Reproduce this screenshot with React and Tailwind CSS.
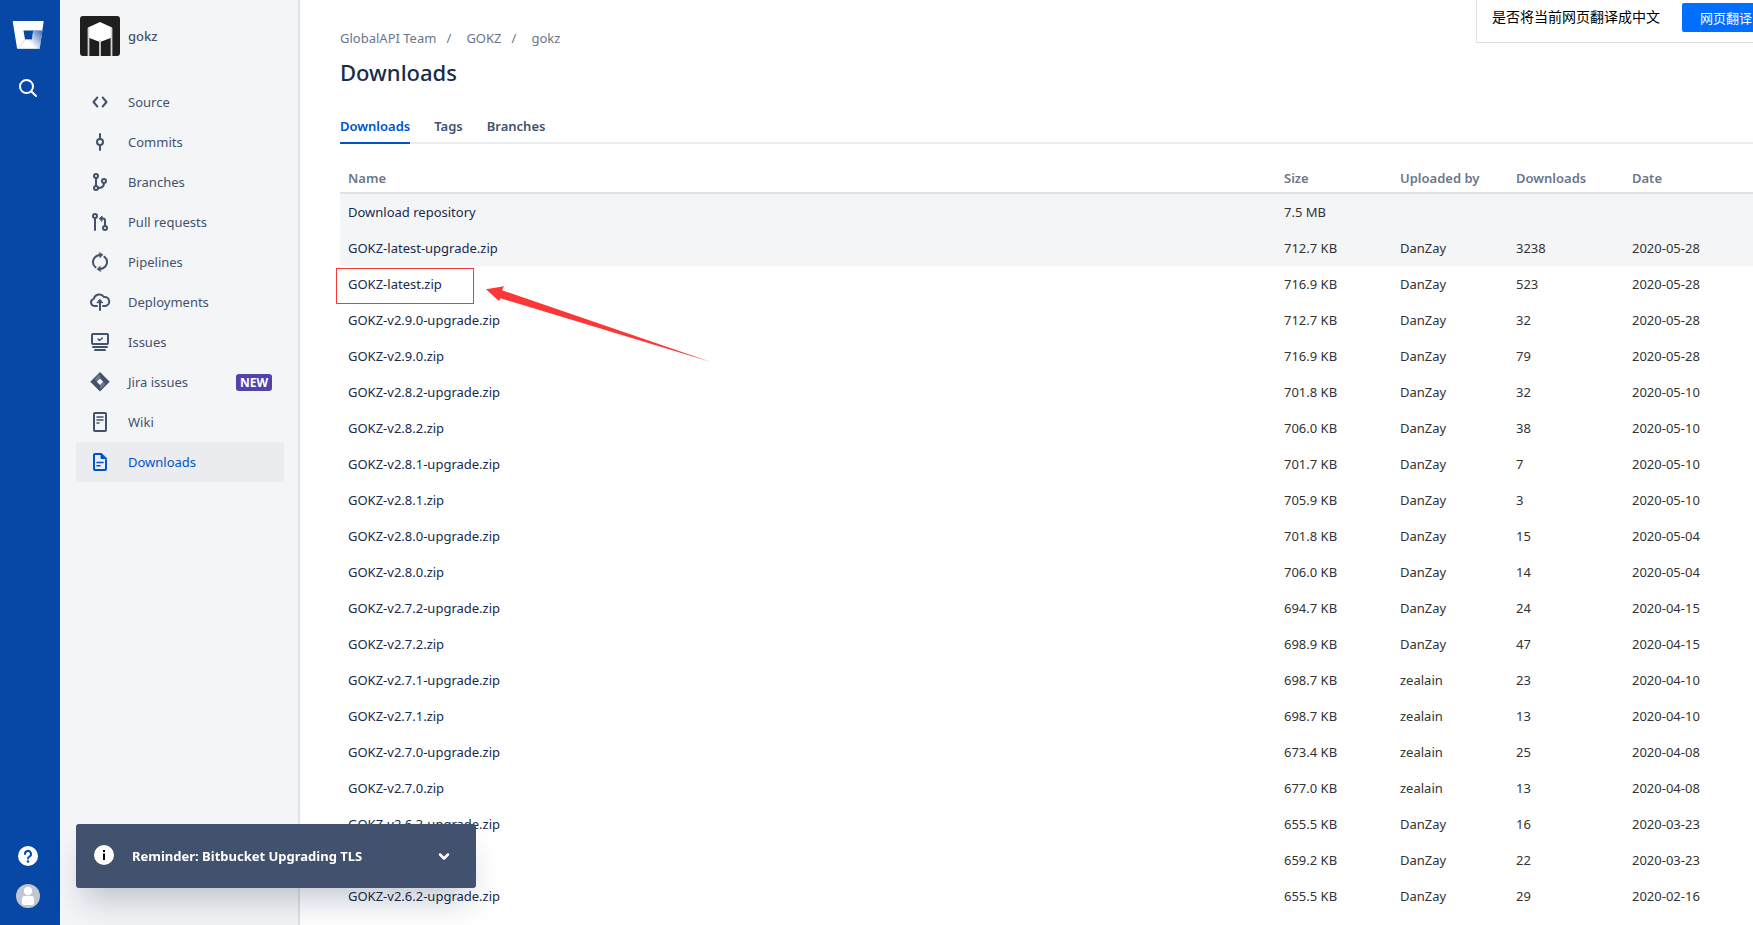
import React, { useState } from 'react';

const stroke = {
  fill: 'none',
  stroke: 'currentColor',
  strokeWidth: 2,
  strokeLinecap: 'round',
  strokeLinejoin: 'round',
};

const Icon = ({ children }) => (
  <svg viewBox="0 0 24 24" className="h-6 w-6 flex-shrink-0" aria-hidden="true" {...stroke}>
    {children}
  </svg>
);

const icons = {
  source: (
    <Icon>
      <path d="M9.3 7.5L5.5 12l3.800 4.500M14.700 7.500l3.800 4.500-3.800 4.500" />
    </Icon>
  ),
  commits: (
    <Icon>
      <circle cx="12" cy="12" r="3" />
      <path d="M12 4v5M12 15v5" />
    </Icon>
  ),
  branches: (
    <Icon>
      <circle cx="8" cy="6" r="2" />
      <circle cx="8" cy="18" r="2" />
      <circle cx="16" cy="11" r="2" />
      <path d="M8 8v8M16 13c0 3.500-2 5-6 5" />
    </Icon>
  ),
  pulls: (
    <Icon>
      <circle cx="7" cy="6" r="2" />
      <circle cx="17" cy="18" r="2" />
      <path d="M7 8v12M13 8.500h2a2 2 0 0 1 2 2V16" />
      <path d="M11.500 8.500L14 6v5z" fill="currentColor" strokeWidth="1" />
    </Icon>
  ),
  pipelines: (
    <Icon>
      <path d="M7.500 17.300C3.500 14 4 6.500 11.500 5M16.500 6.700C20.500 10 20 17.500 12.500 19" />
      <path d="M11.500 2.500l3.500 2.200-3 3zM12.500 21.500L9 19.300l3-3z" fill="currentColor" strokeWidth="0.500" />
    </Icon>
  ),
  deployments: (
    <Icon>
      <path d="M9 16H6.500a3.600 3.600 0 0 1-.700-7.100A5.600 5.600 0 0 1 16 7a4.500 4.500 0 0 1 1.300 9H15" />
      <path d="M12 20V11" />
      <path d="M12 9.500l2.700 3.200H9.300z" fill="currentColor" strokeWidth="1" />
    </Icon>
  ),
  issues: (
    <Icon>
      <rect x="4" y="4" width="16" height="10" rx="1" />
      <path d="M10 9l1.500 1.500L14.300 8" strokeWidth="1.500" />
      <path d="M5 17h14M7 20h10" />
    </Icon>
  ),
  jira: (
    <Icon>
      <path
        d="M12 2L2.300 11.800 12 21.600l9.700-9.800zM12 8.600l3.200 3.200L12 15l-3.200-3.200z"
        fill="currentColor"
        fillRule="evenodd"
        stroke="none"
      />
      <path d="M12 4.500v4.100l-3.200 3.200-1.800-1.800C7 8 9 6 12 4.500z" fill="#97a0af" fillOpacity="0.500" stroke="none" />
      <path d="M12 19v-4l3.200-3.200 1.800 1.800C17 15.500 15 17.500 12 19z" fill="#97a0af" fillOpacity="0.500" stroke="none" />
    </Icon>
  ),
  wiki: (
    <Icon>
      <rect x="6" y="3" width="12" height="18" rx="1" />
      <path d="M9 7h6M9 10h6M9 13h2" strokeWidth="1.600" />
    </Icon>
  ),
  downloads: (
    <Icon>
      <path d="M18 10v9a1 1 0 0 1-1 1H7a1 1 0 0 1-1-1V5a1 1 0 0 1 1-1h6" />
      <path d="M13 3.500v5h5.500z" fill="currentColor" strokeWidth="1" />
      <path d="M9 12.500h6M9 15.700h3" strokeWidth="1.600" />
    </Icon>
  ),
};

const navItems = [
  { label: 'Source', icon: 'source' },
  { label: 'Commits', icon: 'commits' },
  { label: 'Branches', icon: 'branches' },
  { label: 'Pull requests', icon: 'pulls' },
  { label: 'Pipelines', icon: 'pipelines' },
  { label: 'Deployments', icon: 'deployments' },
  { label: 'Issues', icon: 'issues' },
  { label: 'Jira issues', icon: 'jira', isNew: true },
  { label: 'Wiki', icon: 'wiki' },
  { label: 'Downloads', icon: 'downloads', active: true },
];

const files = [
  ['Download repository', '7.5 MB', '', '', ''],
  ['GOKZ-latest-upgrade.zip', '712.7 KB', 'DanZay', '3238', '2020-05-28'],
  ['GOKZ-latest.zip', '716.9 KB', 'DanZay', '523', '2020-05-28'],
  ['GOKZ-v2.9.0-upgrade.zip', '712.7 KB', 'DanZay', '32', '2020-05-28'],
  ['GOKZ-v2.9.0.zip', '716.9 KB', 'DanZay', '79', '2020-05-28'],
  ['GOKZ-v2.8.2-upgrade.zip', '701.8 KB', 'DanZay', '32', '2020-05-10'],
  ['GOKZ-v2.8.2.zip', '706.0 KB', 'DanZay', '38', '2020-05-10'],
  ['GOKZ-v2.8.1-upgrade.zip', '701.7 KB', 'DanZay', '7', '2020-05-10'],
  ['GOKZ-v2.8.1.zip', '705.9 KB', 'DanZay', '3', '2020-05-10'],
  ['GOKZ-v2.8.0-upgrade.zip', '701.8 KB', 'DanZay', '15', '2020-05-04'],
  ['GOKZ-v2.8.0.zip', '706.0 KB', 'DanZay', '14', '2020-05-04'],
  ['GOKZ-v2.7.2-upgrade.zip', '694.7 KB', 'DanZay', '24', '2020-04-15'],
  ['GOKZ-v2.7.2.zip', '698.9 KB', 'DanZay', '47', '2020-04-15'],
  ['GOKZ-v2.7.1-upgrade.zip', '698.7 KB', 'zealain', '23', '2020-04-10'],
  ['GOKZ-v2.7.1.zip', '698.7 KB', 'zealain', '13', '2020-04-10'],
  ['GOKZ-v2.7.0-upgrade.zip', '673.4 KB', 'zealain', '25', '2020-04-08'],
  ['GOKZ-v2.7.0.zip', '677.0 KB', 'zealain', '13', '2020-04-08'],
  ['GOKZ-v2.6.3-upgrade.zip', '655.5 KB', 'DanZay', '16', '2020-03-23'],
  ['GOKZ-v2.6.3.zip', '659.2 KB', 'DanZay', '22', '2020-03-23'],
  ['GOKZ-v2.6.2-upgrade.zip', '655.5 KB', 'DanZay', '29', '2020-02-16'],
];

const GlobalRail = () => (
  <nav aria-label="Global" className="flex w-[60px] flex-shrink-0 flex-col items-center bg-[#0747a6] pt-5 pr-1 pb-[17px] text-white">
    <a href="#home" aria-label="Bitbucket">
      <svg viewBox="0 0 32 30" className="h-[30px] w-8">
        <defs>
          <linearGradient id="bucket" x1="30" y1="11" x2="17" y2="22" gradientUnits="userSpaceOnUse">
            <stop offset="0.100" stopColor="#fff" stopOpacity="0.300" />
            <stop offset="1" stopColor="#fff" />
          </linearGradient>
        </defs>
        <path
          d="M1.600 1h29.200a.8.800 0 0 1 .8 1L27.800 28a1 1 0 0 1-1 1H6.200a1.200 1.200 0 0 1-1.200-1L.8 2a.8.800 0 0 1 .8-1zM11.500 10.500l1.500 9h7l1.200-9z"
          fill="#fff"
          fillRule="evenodd"
        />
        <path d="M30.500 10.500h-9.300L20 19.500h-7L6 28.700h21.500z" fill="#0747a6" />
        <path d="M30.500 10.500h-9.300L20 19.500h-7L6 28.700h21.500z" fill="url(#bucket)" />
      </svg>
    </a>
    <button aria-label="Search" className="mt-[26px]">
      <svg viewBox="0 0 24 24" className="h-6 w-6" {...stroke}>
        <circle cx="10.500" cy="10.500" r="6.500" />
        <path d="M15.500 15.500L20 20" />
      </svg>
    </button>
    <button aria-label="Help" className="mt-auto flex h-5 w-5 items-center justify-center rounded-full bg-white text-[#0747a6]">
      <svg viewBox="0 0 20 20" className="h-5 w-5" {...stroke}>
        <path d="M7 8a3 3 0 1 1 4.500 2.500C10.300 11.200 10 11.600 10 12.500" />
        <circle cx="10" cy="15.500" r="1.200" fill="currentColor" stroke="none" />
      </svg>
    </button>
    <button aria-label="Profile" className="mt-[18px] h-6 w-6 rounded-full bg-[#c1c7d0]">
      <svg viewBox="0 0 24 24" className="h-6 w-6" fill="#fff">
        <circle cx="12" cy="7" r="4.200" />
        <path d="M6 14.500a2.500 2.500 0 0 1 2.500-2.500h7a2.500 2.500 0 0 1 2.500 2.500V19a2 2 0 0 1-2 2H8a2 2 0 0 1-2-2z" />
      </svg>
    </button>
  </nav>
);

const Sidebar = () => (
  <aside className="w-60 flex-shrink-0 border-r-2 border-[#dfe1e6] bg-[#f4f5f7] pt-4 pr-[14px] pl-4 text-[#42526e]">
    <a href="#gokz" className="flex items-center gap-2 pl-1">
      <svg viewBox="0 0 40 40" className="h-10 w-10 rounded-[3px] bg-[#1f1f1f]">
        <path d="M20 6l12 5.500v10L20 26 8 21.500v-10z" fill="#fff" />
        <path d="M8.500 12v28M31.500 12v28M20 24v16" stroke="#d8d5d0" strokeWidth="1.800" />
      </svg>
      <span className="font-medium">gokz</span>
    </a>
    <ul className="mt-[26px]">
      {navItems.map((item) => (
        <li key={item.label}>
          <a
            href={`#${item.icon}`}
            className={`flex h-10 items-center rounded-[3px] px-3 ${
              item.active ? 'bg-[#ebecf0] text-[#0052cc]' : ''
            }`}
          >
            {icons[item.icon]}
            <span className="ml-4 flex-1">{item.label}</span>
            {item.isNew && (
              <span className="rounded-[3px] bg-[#5243aa] px-1 text-xs leading-[17px] font-bold text-white">NEW</span>
            )}
          </a>
        </li>
      ))}
    </ul>
  </aside>
);

const Highlight = () => (
  <>
    <span className="pointer-events-none absolute top-[2px] -left-1 h-9 w-[138px] border border-[#fb3838]" />
    <svg viewBox="0 0 226 78" className="pointer-events-none absolute top-5 left-[146px] h-[78px] w-[226px]" fill="#fb3838">
      <path d="M0 3.300L18 .3l-2 4L225 76 14.500 12.300l-1.500 2.700z" />
    </svg>
  </>
);

const FilesTable = () => (
  <table className="mt-5 w-full table-fixed border-separate border-spacing-0 text-left">
    <colgroup>
      <col />
      <col className="w-[116px]" />
      <col className="w-[116px]" />
      <col className="w-[116px]" />
      <col className="w-[129px]" />
    </colgroup>
    <thead>
      <tr className="h-[30px] text-[#6b778c]">
        {['Name', 'Size', 'Uploaded by', 'Downloads', 'Date'].map((title) => (
          <th key={title} scope="col" className="border-b-2 border-[#dfe1e6] px-2 font-semibold">
            {title}
          </th>
        ))}
      </tr>
    </thead>
    <tbody>
      {files.map(([name, size, user, count, date], i) => (
        <tr key={name} className={`h-9 ${i < 2 ? 'bg-[#f4f5f7]' : ''}`}>
          <td className="relative px-2 text-[#172b4d]">
            <a href="#file">{name}</a>
            {name === 'GOKZ-latest.zip' && <Highlight />}
          </td>
          <td className="px-2">{size}</td>
          <td className="px-2">{user}</td>
          <td className="px-2">{count}</td>
          <td className="px-2">{date}</td>
        </tr>
      ))}
    </tbody>
  </table>
);

const TranslateBar = () => (
  <div className="fixed top-0 right-0 flex h-[43px] w-[277px] items-start overflow-hidden border-b border-l border-[#e0e0e0] bg-white pt-[3px] pl-[15px] font-['Noto_Sans_CJK_SC',sans-serif] whitespace-nowrap text-black">
    <span className="flex-shrink-0 text-sm leading-[26px]">是否将当前网页翻译成中文</span>
    <button className="ml-[22px] h-[29px] flex-shrink-0 rounded-[2px] bg-[#006eff] px-[18px] text-[13px] leading-6 text-white">
      网页翻译
    </button>
  </div>
);

const ReminderFlag = () => {
  const [isExpanded, setIsExpanded] = useState(false);

  return (
    <div className="fixed bottom-[37px] left-[76px] flex h-16 w-[400px] items-center rounded-[3px] bg-[#42526e] pr-5 pl-4 text-white shadow-[0_20px_32px_-8px_rgba(9,30,66,0.24)]">
      <svg viewBox="0 0 24 24" className="h-6 w-6">
        <circle cx="12" cy="11" r="10" fill="#fff" />
        <rect x="11" y="6" width="2" height="2" fill="#000" />
        <rect x="11" y="9.500" width="2" height="6.500" fill="#000" />
      </svg>
      <span className="ml-4 flex-1 font-bold">Reminder: Bitbucket Upgrading TLS</span>
      <button aria-label="Toggle reminder" aria-expanded={isExpanded} onClick={() => setIsExpanded(!isExpanded)}>
        <svg viewBox="0 0 24 24" className="h-6 w-6" {...stroke} strokeWidth="2.500">
          <path d="M8 10.500l4 4 4-4" />
        </svg>
      </button>
    </div>
  );
};

export default function App() {
  return (
    <div className="flex h-screen overflow-hidden bg-white font-['Noto_Sans','Open_Sans',sans-serif] text-[13px] leading-5 text-[#333]">
      <GlobalRail />
      <Sidebar />
      <main className="min-w-0 flex-1 pt-7 pl-10">
        <nav aria-label="Breadcrumb" className="flex text-[#6b778c]">
          <a href="#team">GlobalAPI Team</a>
          <span className="w-[30px] pl-[10px]">/</span>
          <a href="#project">GOKZ</a>
          <span className="w-[30px] pl-[10px]">/</span>
          <a href="#repo">gokz</a>
        </nav>
        <h1 className="mt-[10px] text-[22px] leading-7 font-medium text-[#172b4d]">Downloads</h1>
        <nav aria-label="Sections" className="mt-[30px] flex gap-6 border-b-2 border-[#ebecf0] font-semibold text-[#42526e]">
          <a href="#downloads" className="-mb-[2px] border-b-2 border-[#0052cc] pb-[6px] text-[#0052cc]">Downloads</a>
          <a href="#tags">Tags</a>
          <a href="#branch-list">Branches</a>
        </nav>
        <FilesTable />
      </main>
      <TranslateBar />
      <ReminderFlag />
    </div>
  );
}
